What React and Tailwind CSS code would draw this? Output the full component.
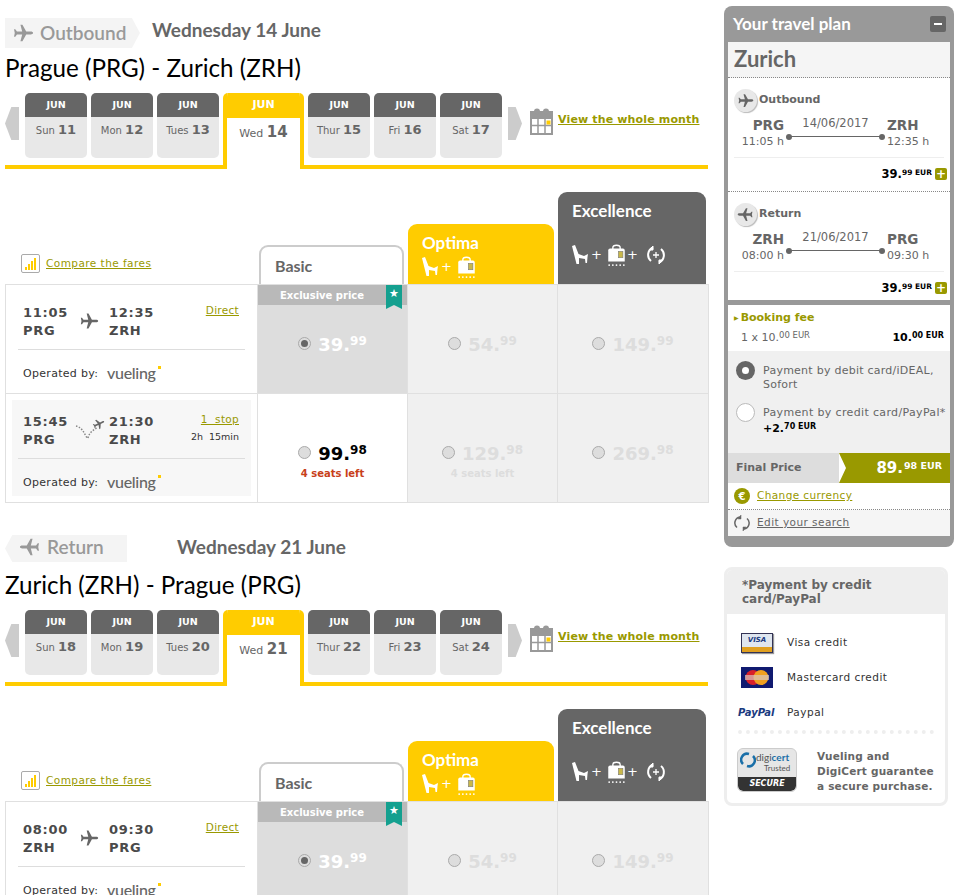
const PLANE = "M23 12c0-1-1.2-1.6-2.6-1.6h-4.9L11.4 3H9.2l1.9 7.4H5.4L3.6 8H2.2l.8 4-.8 4h1.4l1.8-2.4h5.7L9.2 21h2.2l4.1-7.4h4.9c1.4 0 2.6-.6 2.6-1.6z";

function Plane({ className = "", flip = false }) {
  return (
    <svg viewBox="0 0 24 24" className={`${className} ${flip ? "-scale-x-100" : ""}`} fill="currentColor">
      <path d={PLANE} />
    </svg>
  );
}

function Seat({ className = "" }) {
  return (
    <svg viewBox="0 0 16 19" className={className} fill="white">
      <path d="M0 1L3 0l3.5 9 5.5 2 4-2-.5 3-.5 6h-1.5l-.5-4-6-1v6H4.5L3 13z" />
    </svg>
  );
}

function Bag({ className = "" }) {
  return (
    <svg viewBox="0 0 20 24" className={className}>
      <path d="M6 6V4c0-3.5 8-3.5 8 0v2" fill="none" stroke="white" strokeWidth="1.5" />
      <path d="M1 7q0-2 2-2h14q2 0 2 2v12H1z" fill="white" />
      <rect x="12" y="8" width="5" height="7" fill="#c9b84a" stroke="#777" strokeWidth=".6" />
      <g fill="white">
        <circle cx="2" cy="23" r="1" /><circle cx="6" cy="23" r="1" /><circle cx="10" cy="23" r="1" />
        <circle cx="14" cy="23" r="1" /><circle cx="18" cy="23" r="1" />
      </g>
    </svg>
  );
}

function Swap({ className = "" }) {
  return (
    <svg viewBox="0 0 20 20" className={className} fill="none" stroke="white" strokeWidth="2">
      <path d="M7 2.5A8 8 0 0 0 5 16" />
      <path d="M13 17.5A8 8 0 0 0 15 4" />
      <path d="M13 19v-4h4z" fill="white" strokeWidth="1" />
      <path d="M7 1v4H3z" fill="white" strokeWidth="1" />
      <path d="M10 7v6M7 10h6" strokeWidth="1.3" />
    </svg>
  );
}

function Price({ whole, cents, className = "" }) {
  return (
    <span className={`font-bold text-[18px] leading-[18px] ${className}`}>
      {whole}.<span className="align-[6px] text-[12px]">{cents}</span>
    </span>
  );
}

function Radio({ checked = false }) {
  return (
    <span className="flex h-[13px] w-[13px] shrink-0 items-center justify-center rounded-full border border-[#aaa] bg-[#ddd]">
      {checked && <span className="h-[7px] w-[7px] rounded-full bg-[#666]" />}
    </span>
  );
}

function DateTab({ day, num, active }) {
  if (active) {
    return (
      <div className="relative z-10 -mb-1 flex h-[76px] w-[81px] flex-col overflow-hidden rounded-t-[5px] border-x-4 border-[#fc0] bg-white">
        <div className="flex h-[25px] shrink-0 items-center justify-center bg-[#fc0] text-[11px] font-bold text-white">JUN</div>
        <div className="pt-[3px] text-center text-[11px] text-[#666]">
          {day} <span className="font-bold text-[15px]">{num}</span>
        </div>
      </div>
    );
  }
  return (
    <div className="h-[65px] w-[62px] overflow-hidden rounded-[5px] bg-[#e8e8e8]">
      <div className="flex h-[24px] items-center justify-center bg-[#666] text-[9.5px] font-bold text-white">JUN</div>
      <div className="pt-[3px] text-center text-[10px] text-[#666]">
        {day} <span className="font-bold text-[13px]">{num}</span>
      </div>
    </div>
  );
}

function Calendar() {
  return (
    <svg viewBox="0 0 23 27" className="h-[27px] w-[23px]">
      <rect x="1" y="4" width="21" height="22" fill="none" stroke="#999" strokeWidth="2" />
      <rect x="1" y="4" width="21" height="7" fill="#999" />
      <circle cx="7" cy="3.5" r="3" fill="#999" />
      <circle cx="16" cy="3.5" r="3" fill="#999" />
      <path d="M1 17.5h21M8 11v15M15 11v15" stroke="#999" strokeWidth="1.5" />
      <rect x="16.5" y="12.5" width="4" height="4" fill="#fc0" />
    </svg>
  );
}

function Vueling() {
  return (
    <span className="relative -mt-[3px] font-['Lato',sans-serif] text-[16px] font-medium leading-none tracking-[-0.3px] text-[#666]">
      vueling
      <span className="absolute -right-[5px] top-[1px] h-[3px] w-[3px] bg-[#fc0]" />
    </span>
  );
}

function FlightCell({ flight }) {
  return (
    <div className="h-full p-[6px]">
      <div className={`h-full px-[6px] ${flight.stop ? "bg-[#f7f7f7]" : ""}`}>
        <div className="flex h-[59px] items-start border-b border-[#ddd] pt-[13px] pl-[5px] pr-[6px]">
          <div className="w-[48px] text-[13px] font-bold leading-[18px] tracking-[0.7px] text-[#4a4a4a]">
            {flight.dep}
            <br />
            {flight.from}
          </div>
          <div className="flex w-[38px] justify-center pt-[7px]">
            {flight.stop ? (
              <svg viewBox="0 0 32 24" className="-mt-[2px] ml-[2px] h-[24px] w-[32px] text-[#666]" fill="none">
                <path d="M1 8c5 1 8 6 11 12M13 20c1-5 5-8 9-10" stroke="#888" strokeWidth="1.5" strokeDasharray="1.5 1.5" />
                <g transform="translate(18 -1) rotate(-25 7 9) scale(.55)">
                  <path d={PLANE} fill="currentColor" />
                </g>
              </svg>
            ) : (
              <Plane className="-ml-[2px] h-[20px] w-[20px] text-[#666]" />
            )}
          </div>
          <div className="w-[48px] text-[13px] font-bold leading-[18px] tracking-[0.7px] text-[#4a4a4a]">
            {flight.arr}
            <br />
            {flight.to}
          </div>
          <div className="-mt-[7px] flex-1 whitespace-pre text-right">
            <a className="text-[10.5px] tracking-[0.3px] text-[#990] underline">{flight.stop || "Direct"}</a>
            {flight.duration && <div className="text-[9.5px] text-[#333]">{flight.duration}</div>}
          </div>
        </div>
        <div className="flex items-center pt-[16px] pl-[5px] text-[11px] tracking-[0.3px] text-[#333]">
          <span className="w-[84px]">Operated by:</span>
          <Vueling />
        </div>
      </div>
    </div>
  );
}

function FareCell({ fare }) {
  const { whole, cents, state, seats } = fare;
  const bg = state === "selected" ? "bg-[#ddd]" : state === "open" ? "bg-white" : "bg-[#f0f0f0]";
  const text = state === "selected" ? "text-white" : state === "open" ? "text-black" : "text-[#ddd]";
  return (
    <div className={`relative flex flex-col items-center border-l border-[#e0e0e0] pt-[47px] ${bg}`}>
      {state === "selected" && (
        <div className="absolute inset-x-0 top-0 flex h-[20px] items-center bg-[#b9b9b9]">
          <span className="w-[128px] text-center text-[10px] font-bold text-white">Exclusive price</span>
          <span className="absolute right-[5px] top-0 flex h-[24px] w-[16px] justify-center bg-[#14a08f] pt-[3px] text-[11px] leading-[12px] text-white [clip-path:polygon(0_0,100%_0,100%_100%,50%_83%,0_100%)]">
            ★
          </span>
        </div>
      )}
      <div className="flex items-center gap-[7px]">
        <Radio checked={state === "selected"} />
        <Price whole={whole} cents={cents} className={text} />
      </div>
      {seats && (
        <div className={`mt-[3px] text-[10px] font-bold ${state === "open" ? "text-[#c8401a]" : "text-[#ddd]"}`}>
          {seats}
        </div>
      )}
    </div>
  );
}

function FareHeaders() {
  return (
    <div className="flex h-[92px] items-end">
      <div className="flex w-[254px] items-center gap-[6px] pb-[11px] pl-[16px]">
        <span className="flex h-[19px] w-[19px] items-end justify-center gap-[1px] rounded-[2px] border border-[#aaa] bg-white pb-[2px]">
          <i className="h-[3px] w-[2px] bg-[#fc0]" />
          <i className="h-[6px] w-[2px] bg-[#fc0]" />
          <i className="h-[9px] w-[2px] bg-[#fc0]" />
          <i className="h-[12px] w-[2px] bg-[#fc0]" />
        </span>
        <a className="text-[10.5px] tracking-[0.45px] text-[#990] underline">Compare the fares</a>
      </div>
      <div className="h-[39px] w-[145px] rounded-t-[9px] border-x-2 border-t-2 border-[#ccc] pl-[14px] pt-[9px] font-['Lato',sans-serif] text-[16px] font-bold leading-[20px] text-[#666]">
        Basic
      </div>
      <div className="ml-[4px] h-[60px] w-[146px] rounded-t-[9px] bg-[#fc0] pl-[14px] pt-[8px] text-white">
        <div className="font-['Lato',sans-serif] text-[17px] font-bold leading-[22px]">Optima</div>
        <div className="flex items-start pt-[3px]">
          <Seat className="h-[19px] w-[16px]" />
          <span className="ml-[3px] mt-[2px] text-[13px] leading-[16px]">+</span>
          <Bag className="ml-[5px] -mt-[1px] h-[22px] w-[19px]" />
        </div>
      </div>
      <div className="ml-[4px] h-[92px] w-[148px] rounded-t-[9px] bg-[#666] pl-[14px] pt-[8px] text-white">
        <div className="font-['Lato',sans-serif] text-[17px] font-bold leading-[22px]">Excellence</div>
        <div className="flex items-start pt-[23px]">
          <Seat className="h-[19px] w-[16px]" />
          <span className="ml-[3px] mt-[2px] text-[13px] leading-[16px]">+</span>
          <Bag className="ml-[5px] -mt-[1px] h-[22px] w-[19px]" />
          <span className="ml-[1px] mt-[2px] text-[13px] leading-[16px]">+</span>
          <Swap className="ml-[8px] h-[20px] w-[20px]" />
        </div>
      </div>
    </div>
  );
}

function FlightSection({ section }) {
  return (
    <section>
      <div className="flex h-[33px] items-start">
        <div
          className={`flex items-center bg-[#f4f4f4] font-['Lato',sans-serif] text-[19px] font-semibold text-[#999] ${section.tagClass}`}
        >
          <Plane className="mr-[6px] h-[22px] w-[22px]" flip={section.flip} />
          {section.label}
        </div>
        <div className={`-mt-[1px] font-['Lato',sans-serif] text-[19px] font-bold leading-[26px] text-[#666] ${section.dateClass}`}>
          {section.date}
        </div>
      </div>
      <h2 className="h-[42px] font-['Lato',sans-serif] text-[24.2px] font-normal leading-[34px] text-black">
        {section.route}
      </h2>
      <div className="flex h-[76px] w-[703px] items-start border-b-4 border-[#fc0]">
        <div className="mt-[14px] h-[33px] w-[14px] bg-[#ccc] [clip-path:polygon(0_50%,45%_0,100%_0,100%_100%,45%_100%)]" />
        <div className="ml-[6px] flex items-start gap-[4px]">
          {section.days.map((d) => (
            <DateTab key={d.num} day={d.day} num={d.num} active={d.active} />
          ))}
        </div>
        <div className="ml-[6px] mt-[14px] h-[33px] w-[14px] bg-[#ccc] [clip-path:polygon(0_0,55%_0,100%_50%,55%_100%,0_100%)]" />
        <div className="ml-[8px] mt-[15px]">
          <Calendar />
        </div>
        <a className="ml-[5px] mt-[19px] text-[11px] font-bold leading-[15px] tracking-[0.15px] text-[#990] underline">View the whole month</a>
      </div>
      <div className="h-[23px]" />
      <FareHeaders />
      <div className="w-[704px] border border-[#e0e0e0]">
        {section.rows.map((row, i) => (
          <div
            key={i}
            className={`grid grid-cols-[251px_150px_150px_151px] ${i > 0 ? "h-[109px] border-t border-[#e0e0e0]" : "h-[108px]"}`}
          >
            <FlightCell flight={row.flight} />
            {row.fares.map((f, j) => (
              <FareCell key={j} fare={f} />
            ))}
          </div>
        ))}
      </div>
    </section>
  );
}

const sections = [
  {
    label: "Outbound",
    tagClass: "h-[30px] w-[135px] pl-[7px] [clip-path:polygon(0_0,94%_0,100%_50%,94%_100%,0_100%)]",
    date: "Wednesday 14 June",
    dateClass: "ml-[12px]",
    route: "Prague (PRG) - Zurich (ZRH)",
    days: [
      { day: "Sun", num: 11 },
      { day: "Mon", num: 12 },
      { day: "Tues", num: 13 },
      { day: "Wed", num: 14, active: true },
      { day: "Thur", num: 15 },
      { day: "Fri", num: 16 },
      { day: "Sat", num: 17 },
    ],
    rows: [
      {
        flight: { dep: "11:05", arr: "12:35", from: "PRG", to: "ZRH" },
        fares: [
          { whole: 39, cents: 99, state: "selected" },
          { whole: 54, cents: 99, state: "off" },
          { whole: 149, cents: 99, state: "off" },
        ],
      },
      {
        flight: { dep: "15:45", arr: "21:30", from: "PRG", to: "ZRH", stop: "1  stop", duration: "2h  15min" },
        fares: [
          { whole: 99, cents: 98, state: "open", seats: "4 seats left" },
          { whole: 129, cents: 98, state: "off", seats: "4 seats left" },
          { whole: 269, cents: 98, state: "off" },
        ],
      },
    ],
  },
  {
    label: "Return",
    flip: true,
    tagClass: "h-[27px] w-[122px] pb-[3px] pl-[14px] [clip-path:polygon(0_50%,6%_0,100%_0,100%_100%,6%_100%)]",
    date: "Wednesday 21 June",
    dateClass: "ml-[50px]",
    route: "Zurich (ZRH) - Prague (PRG)",
    days: [
      { day: "Sun", num: 18 },
      { day: "Mon", num: 19 },
      { day: "Tues", num: 20 },
      { day: "Wed", num: 21, active: true },
      { day: "Thur", num: 22 },
      { day: "Fri", num: 23 },
      { day: "Sat", num: 24 },
    ],
    rows: [
      {
        flight: { dep: "08:00", arr: "09:30", from: "ZRH", to: "PRG" },
        fares: [
          { whole: 39, cents: 99, state: "selected" },
          { whole: 54, cents: 99, state: "off" },
          { whole: 149, cents: 99, state: "off" },
        ],
      },
    ],
  },
];

function PlanLeg({ label, from, to, dep, arr, date, flip, last }) {
  return (
    <div className={last ? "" : "border-b border-dotted border-[#888]"}>
      <div className="pl-[6px] pr-[3px] pt-[10px]">
        <div className="flex h-[24px] items-center gap-[2px]">
          <span className="flex h-[23px] w-[23px] items-center justify-center rounded-full bg-[#e8e8e8] text-[#666] shadow-[1px_1px_1px_#bbb]">
            <Plane className="h-[17px] w-[17px]" flip={flip} />
          </span>
          <span className="text-[11px] font-bold text-[#666]">{label}</span>
        </div>
        <div className="mr-[3px] flex h-[46px] items-start border-b border-[#eee] pt-[5px] text-[#666]">
          <div className="w-[50px] text-right">
            <div className="text-[13.5px] font-bold leading-[17px]">{from}</div>
            <div className="text-[11px] leading-[15px]">{dep}</div>
          </div>
          <div className="-mt-[1px] w-[103px] px-[3px] text-center">
            <div className="text-[11.5px] leading-[15px]">{date}</div>
            <div className="relative mt-[5px] h-[1px] bg-[#666]">
              <i className="absolute -left-[1px] -top-[2.5px] h-[6px] w-[6px] rounded-full bg-[#666]" />
              <i className="absolute -right-[1px] -top-[2.5px] h-[6px] w-[6px] rounded-full bg-[#666]" />
            </div>
          </div>
          <div className="w-[50px]">
            <div className="text-[13.5px] font-bold leading-[17px]">{to}</div>
            <div className="text-[11px] leading-[15px]">{arr}</div>
          </div>
        </div>
        <div className={`flex items-start justify-end gap-[3px] pt-[8px] text-black ${last ? "h-[28px]" : "h-[33px]"}`}>
          <span className="text-[11.5px] font-bold leading-[14px]">
            39.<span className="align-[3px] text-[7.5px]">99 EUR</span>
          </span>
          <span className="mt-[2px] flex h-[12px] w-[12px] items-center justify-center rounded-[2px] bg-[#990] text-[12px] font-bold leading-none text-white">
            +
          </span>
        </div>
      </div>
    </div>
  );
}

function TravelPlan() {
  return (
    <div className="rounded-[8px] bg-[#999] px-[4px] pb-[11px]">
      <div className="flex h-[36px] items-center justify-between pl-[5px] pr-[4px] font-['Lato',sans-serif] text-[17px] font-bold text-white">
        Your travel plan
        <span className="flex h-[16px] w-[16px] items-center justify-center rounded-[2px] bg-[#666]">
          <i className="h-[2px] w-[8px] bg-white" />
        </span>
      </div>
      <div className="bg-white">
        <div className="flex h-[36px] items-center border-b border-dotted border-[#888] bg-[#f5f5f5] px-[6px] pb-[2px] font-['Lato',sans-serif] text-[22px] font-bold text-[#666]">
          Zurich
        </div>
        <PlanLeg label="Outbound" from="PRG" to="ZRH" dep="11:05 h" arr="12:35 h" date="14/06/2017" />
        <PlanLeg label="Return" from="ZRH" to="PRG" dep="08:00 h" arr="09:30 h" date="21/06/2017" flip last />
        <div className="h-[5px] bg-[#999]" />
        <div className="h-[46px] px-[6px] pt-[5px]">
          <div className="flex items-center gap-[2px] text-[11px] font-bold leading-[15px] text-[#990]">
            <span className="text-[6px]">▶</span> Booking fee
          </div>
          <div className="mt-[4px] flex items-center justify-between pl-[7px]">
            <span className="text-[11px] text-[#666]">
              1 x 10.<span className="align-[3px] text-[8.5px]">00 EUR</span>
            </span>
            <span className="text-[11px] font-bold text-black">
              10.<span className="align-[3px] text-[8px]">00 EUR</span>
            </span>
          </div>
        </div>
        <div className="h-[102px] bg-[#f0f0f0] pl-[8px] pt-[10px] text-[11px] leading-[14px] text-[#666]">
          <div className="flex gap-[8px]">
            <span className="flex h-[19px] w-[19px] shrink-0 items-center justify-center rounded-full bg-[#666]">
              <i className="h-[7px] w-[7px] rounded-full bg-white" />
            </span>
            <span className="pt-[3px] tracking-[0.25px]">
              Payment by debit card/iDEAL,
              <br />
              Sofort
            </span>
          </div>
          <div className="mt-[11px] flex gap-[8px]">
            <span className="h-[19px] w-[19px] shrink-0 rounded-full border border-[#bbb] bg-white" />
            <span className="whitespace-nowrap pt-[3px] tracking-[0.35px]">
              Payment by credit card/PayPal*
              <br />
              <span className="font-bold tracking-normal text-black">
                +2.<span className="align-[3px] text-[8px]">70 EUR</span>
              </span>
            </span>
          </div>
        </div>
        <div className="flex h-[30px]">
          <div className="flex w-[111px] items-center bg-[#ddd] pl-[8px] text-[11px] font-bold text-[#666]">Final Price</div>
          <div className="flex flex-1 items-center justify-end bg-[#990] pr-[8px] text-[15px] font-bold text-white [clip-path:polygon(0_0,100%_0,100%_100%,0_100%,7px_50%)]">
            89.<span className="mb-[4px] ml-[1px] text-[9.5px]">98 EUR</span>
          </div>
        </div>
        <div className="flex h-[27px] items-center gap-[7px] border-b border-dotted border-[#888] px-[6px]">
          <span className="flex h-[16px] w-[16px] items-center justify-center rounded-full bg-[#990] text-[10px] font-bold text-white">€</span>
          <a className="text-[10.5px] tracking-[0.4px] text-[#990] underline">Change currency</a>
        </div>
        <div className="flex h-[26px] items-center gap-[7px] bg-[#f5f5f5] px-[6px]">
          <svg viewBox="0 0 16 16" className="h-[16px] w-[16px]" fill="none" stroke="#666" strokeWidth="1.5">
            <path d="M6 2a6 6 0 0 0-3 10.5M10 14a6 6 0 0 0 3-10.5" />
            <path d="M7 0v4H4zM9 16v-4h3z" fill="#666" strokeWidth=".5" />
          </svg>
          <a className="text-[10.5px] tracking-[0.45px] text-[#666] underline">Edit your search</a>
        </div>
      </div>
    </div>
  );
}

function CardRow({ logo, label }) {
  return (
    <div className="flex h-[35px] items-center text-[10.5px] tracking-[0.5px] text-[#333]">
      <div className="w-[57px] pl-[11px]">{logo}</div>
      <span>{label}</span>
    </div>
  );
}

function PaymentInfo() {
  return (
    <div className="mt-[20px] w-[224px] overflow-hidden rounded-[8px] border-[3px] border-[#eee]">
      <div className="h-[44px] bg-[#eee] pl-[15px] pr-[8px] pt-[8px] text-[12px] font-bold leading-[14px] text-[#666]">
        *Payment by credit card/PayPal
      </div>
      <div className="px-[11px] pt-[11px]">
        <div className="-ml-[8px]">
          <CardRow
            label="Visa credit"
            logo={
              <div className="flex h-[20px] w-[32px] flex-col border border-[#335] bg-[#dfe6ef] shadow-[1px_1px_1px_#999]">
                <span className="flex-1 text-center text-[7px] font-bold italic leading-[13px] tracking-normal text-[#1a3a80]">VISA</span>
                <i className="h-[5px] bg-[#e0a020]" />
              </div>
            }
          />
          <CardRow
            label="Mastercard credit"
            logo={
              <svg viewBox="0 0 32 21" className="h-[21px] w-[32px]">
                <rect width="32" height="21" fill="#101a70" />
                <circle cx="12" cy="10.5" r="7.5" fill="#d8202a" />
                <circle cx="20" cy="10.5" r="7.5" fill="#f0a020" />
                <rect x="4" y="8" width="24" height="5" fill="#d9c8c0" opacity=".7" />
              </svg>
            }
          />
          <CardRow
            label="Paypal"
            logo={<span className="-ml-[3px] block text-[10px] font-bold italic tracking-normal text-[#1a3a80]">PayPal</span>}
          />
        </div>
        <div className="border-t-4 border-dotted border-[#eee]" />
        <div className="mt-[14px] flex items-start pb-[9px]">
          <div className="-ml-[1px] flex h-[44px] w-[60px] shrink-0 flex-col overflow-hidden rounded-[6px] border border-[#ccc] bg-[#e6e6e6]">
            <div className="flex flex-1 items-start pl-[2px] pt-[2px]">
              <svg viewBox="0 0 16 16" className="mt-[1px] h-[16px] w-[16px] shrink-0" fill="none" stroke="#1a6fa8" strokeWidth="2.5">
                <path d="M3 12A6 6 0 0 1 9 2M13 4a6 6 0 0 1-6 10" />
              </svg>
              <div className="font-['Lato',sans-serif] text-[10px] leading-[12px] text-[#555]">
                digi<span className="font-bold text-[#1a6fa8]">cert</span>
                <div className="pl-[8px] text-[8px] leading-[10px]">Trusted</div>
              </div>
            </div>
            <div className="flex h-[14px] items-center justify-center rounded-b-[5px] bg-[#333] text-[8px] font-bold italic text-white">
              SECURE
            </div>
          </div>
          <div className="ml-[20px] whitespace-nowrap pt-[1px] text-[10.5px] font-bold leading-[15px] tracking-[0.2px] text-[#666]">
            Vueling and
            <br />
            DigiCert guarantee
            <br />a secure purchase.
          </div>
        </div>
      </div>
    </div>
  );
}

export default function App() {
  return (
    <div className="flex h-[895px] overflow-hidden bg-white font-['DejaVu_Sans',sans-serif]">
      <main className="ml-[5px] w-[704px] pt-[18px]">
        <FlightSection section={sections[0]} />
        <div className="h-[32px]" />
        <FlightSection section={sections[1]} />
      </main>
      <aside className="ml-[15px] w-[230px] pt-[6px]">
        <TravelPlan />
        <PaymentInfo />
      </aside>
    </div>
  );
}
